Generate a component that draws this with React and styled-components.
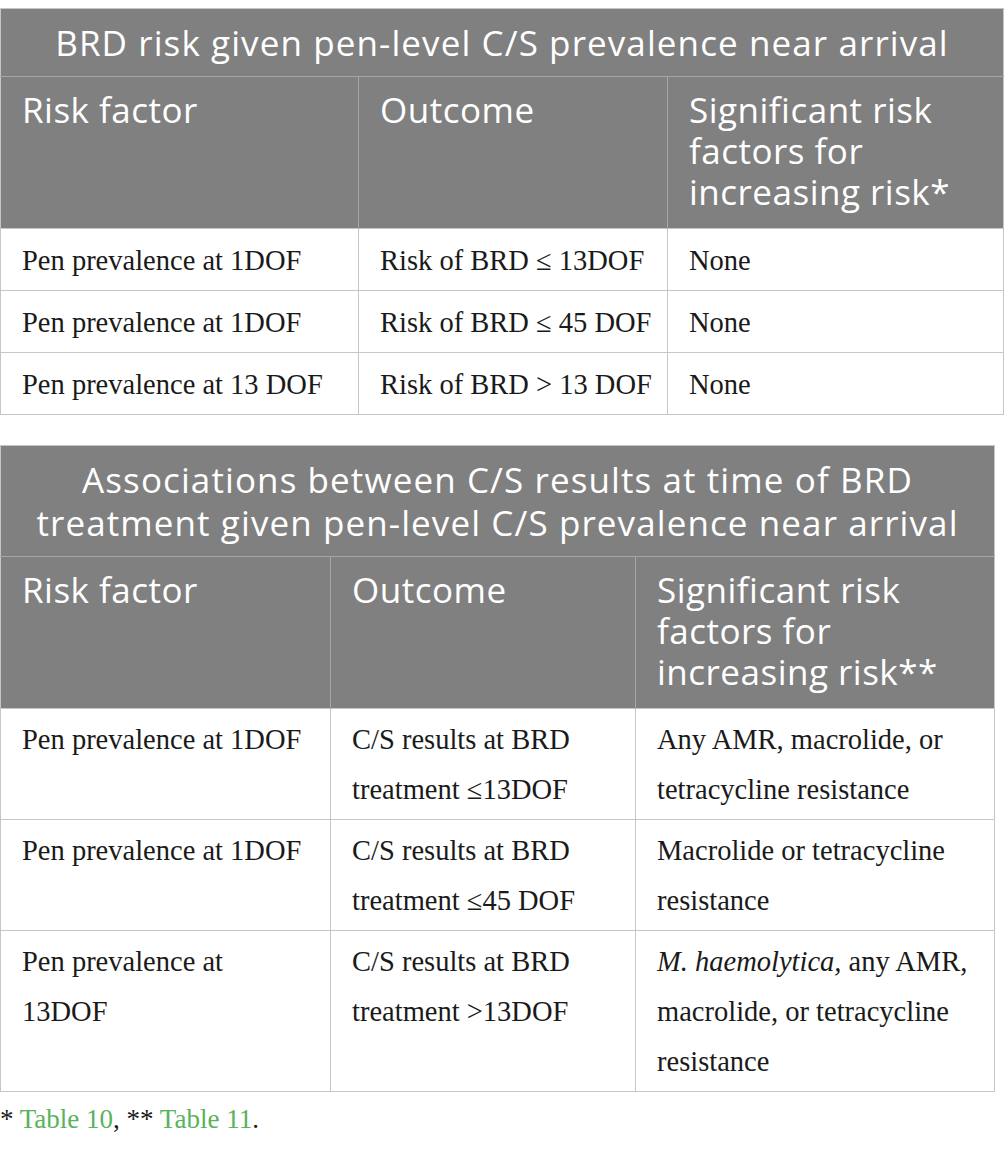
import React from 'react'
import styled, { createGlobalStyle } from 'styled-components'

const GlobalStyle = createGlobalStyle`
    body {
        margin: 0;
        background: #ffffff;
    }
`

const Page = styled.div`
    padding-top: 8px;
    display: flex;
    flex-direction: column;
    gap: 30px;
`

const Table = styled.table`
    width: ${(p) => p.width}px;
    border-collapse: collapse;
    table-layout: fixed;
    border: 1px solid #c6c6c6;
`

const TitleCell = styled.th`
    background: #7f807f;
    color: #ffffff;
    font-family: "Open Sans", "Noto Sans", sans-serif;
    font-weight: 400;
    font-size: 35px;
    letter-spacing: 1.1px;
    line-height: 43px;
    text-align: center;
    padding: 12px 12px 12px;
    border-bottom: 1px solid #a6a6a6;
`

const HeadCell = styled.th`
    background: #7f807f;
    color: #ffffff;
    font-family: "Open Sans", "Noto Sans", sans-serif;
    font-weight: 400;
    font-size: 35px;
    letter-spacing: 0.5px;
    line-height: 41px;
    text-align: left;
    vertical-align: top;
    padding: 12px 12px 16px 21px;
    height: 123px;
    border-left: 1px solid #a6a6a6;
    &:first-child { border-left: none; }
`

const Cell = styled.td`
    font-family: "Liberation Serif", "Times New Roman", serif;
    font-size: 28.5px;
    line-height: ${(p) => (p.loose ? '50px' : '30px')};
    color: #1a1a1a;
    vertical-align: top;
    padding: ${(p) => (p.loose ? '6px 19px 4px 21px' : '17px 10px 14px 21px')};
    border: 1px solid #c6c6c6;
`

const Note = styled.p`
    margin: -18px 0 0;
    font-family: "Liberation Serif", "Times New Roman", serif;
    font-size: 27px;
    color: #1a1a1a;
`

const Ref = styled.span`
    color: #58b35a;
`

const first = [
    ['Pen prevalence at 1DOF', 'Risk of BRD ≤ 13DOF', 'None'],
    ['Pen prevalence at 1DOF', 'Risk of BRD ≤ 45 DOF', 'None'],
    ['Pen prevalence at 13 DOF', 'Risk of BRD > 13 DOF', 'None'],
]

const second = [
    ['Pen prevalence at 1DOF', <>C/S results at BRD treatment ≤13DOF</>, 'Any AMR, macrolide, or tetracycline resistance'],
    ['Pen prevalence at 1DOF', <>C/S results at BRD treatment ≤45 DOF</>, 'Macrolide or tetracycline resistance'],
    ['Pen prevalence at 13DOF', <>C/S results at BRD treatment &gt;13DOF</>, <><i>M. haemolytica,</i> any AMR, macrolide, or tetracycline resistance</>],
]

const App = () => {
    return (
        <Page>
            <GlobalStyle />
            <Table width={1004}>
                <colgroup>
                    <col style={{ width: 358 }} />
                    <col style={{ width: 309 }} />
                    <col />
                </colgroup>
                <thead>
                    <tr>
                        <TitleCell colSpan={3}>BRD risk given pen-level C/S prevalence near arrival</TitleCell>
                    </tr>
                    <tr>
                        <HeadCell>Risk factor</HeadCell>
                        <HeadCell>Outcome</HeadCell>
                        <HeadCell>Significant risk factors for increasing risk*</HeadCell>
                    </tr>
                </thead>
                <tbody>
                    {first.map((row, i) => (
                        <tr key={i}>
                            {row.map((c, j) => <Cell key={j}>{c}</Cell>)}
                        </tr>
                    ))}
                </tbody>
            </Table>

            <Table width={995}>
                <colgroup>
                    <col style={{ width: 330 }} />
                    <col style={{ width: 305 }} />
                    <col />
                </colgroup>
                <thead>
                    <tr>
                        <TitleCell colSpan={3}>
                            Associations between C/S results at time of BRD treatment given pen-level C/S prevalence near arrival
                        </TitleCell>
                    </tr>
                    <tr>
                        <HeadCell>Risk factor</HeadCell>
                        <HeadCell>Outcome</HeadCell>
                        <HeadCell>Significant risk factors for increasing risk**</HeadCell>
                    </tr>
                </thead>
                <tbody>
                    {second.map((row, i) => (
                        <tr key={i}>
                            {row.map((c, j) => <Cell key={j} loose>{c}</Cell>)}
                        </tr>
                    ))}
                </tbody>
            </Table>

            <Note>
                * <Ref>Table 10</Ref>, ** <Ref>Table 11</Ref>.
            </Note>
        </Page>
    )
}

export default App
